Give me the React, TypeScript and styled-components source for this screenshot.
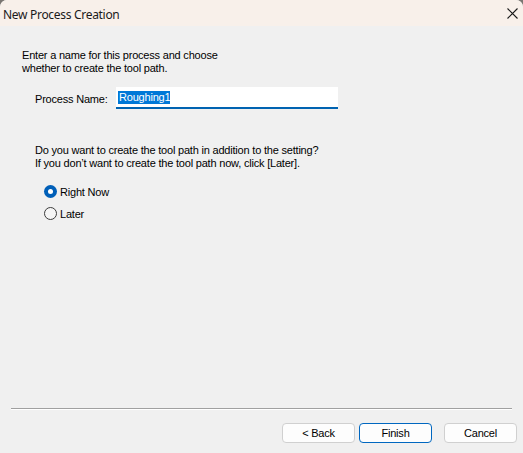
import React, { FC, useState } from 'react';
import styled, { createGlobalStyle } from 'styled-components';

const GlobalStyle = createGlobalStyle`
    html, body {
        margin: 0;
        padding: 0;
        background: #7a7672;
    }
    #root {
        width: 523px;
        height: 453px;
    }
`;

const Window = styled.div`
    width: 523px;
    height: 453px;
    display: flex;
    flex-direction: column;
    background: #f0f0f0;
    border-radius: 7px 7px 0 0;
    overflow: hidden;
    font-family: 'Liberation Sans', Arial, sans-serif;
    font-size: 11px;
    letter-spacing: -0.2px;
    color: #000;
`;

const TitleBar = styled.div`
    height: 26px;
    flex-shrink: 0;
    display: flex;
    align-items: center;
    justify-content: space-between;
    background: #f8f0ea;
    padding: 0 0 0 3px;
`;

const Title = styled.span`
    font-family: 'Noto Sans', 'Open Sans', sans-serif;
    font-size: 12px;
    letter-spacing: -0.3px;
    color: #1a1a1a;
    position: relative;
    top: 1px;
`;

const CloseButton = styled.button`
    width: 22px;
    height: 22px;
    border: none;
    background: transparent;
    display: flex;
    align-items: center;
    justify-content: center;
    padding: 0;
`;

const Content = styled.div`
    flex: 1;
    display: flex;
    flex-direction: column;
    padding: 23px 0 0 22px;
`;

const Paragraph = styled.p<{ indent?: number }>`
    margin: 0;
    line-height: 13px;
    padding-left: ${props => props.indent ?? 0}px;
`;

const NameRow = styled.div`
    display: flex;
    align-items: center;
    margin: 12px 0 35px 13px;
    height: 22px;
`;

const NameLabel = styled.label`
    width: 81px;
    flex-shrink: 0;
    position: relative;
    top: 1px;
`;

const NameField = styled.div`
    width: 220px;
    height: 20px;
    background: #fff;
    border-bottom: 2px solid #0063b1;
    display: flex;
    align-items: center;
    padding-left: 2px;
    box-sizing: content-box;
`;

const Selected = styled.span`
    background: #0078d7;
    color: #fff;
    line-height: 13px;
    padding: 0 0 0 1px;
`;

const RadioList = styled.div`
    display: flex;
    flex-direction: column;
    margin: 10px 0 0 22px;
`;

const RadioRow = styled.label`
    height: 22px;
    display: flex;
    align-items: center;
    gap: 3px;
    cursor: default;
`;

const RadioMark = styled.span<{ checked: boolean }>`
    width: 13px;
    height: 13px;
    box-sizing: border-box;
    border-radius: 50%;
    border: ${props => (props.checked ? '0' : '1px solid #3b3b3b')};
    background: ${props => (props.checked ? '#005fb8' : '#f5f5f5')};
    display: flex;
    align-items: center;
    justify-content: center;

    &::after {
        content: '';
        display: ${props => (props.checked ? 'block' : 'none')};
        width: 5px;
        height: 5px;
        border-radius: 50%;
        background: #fff;
    }
`;

const RadioText = styled.span`
    position: relative;
    top: 1px;
`;

const Separator = styled.div`
    height: 1px;
    margin: 0 11px 0 11px;
    background: #a0a0a0;
    border-bottom: 1px solid #fff;
    flex-shrink: 0;
`;

const ButtonRow = styled.div`
    display: flex;
    justify-content: flex-end;
    padding: 13px 6px 10px 0;
`;

const DialogButton = styled.button<{ primary?: boolean; spaced?: boolean }>`
    width: 73px;
    height: 20px;
    margin-left: ${props => (props.spaced ? 12 : 4)}px;
    box-sizing: border-box;
    border-radius: 4px;
    border: 1px solid ${props => (props.primary ? '#0067c0' : '#d0d0d0')};
    background: #fdfdfd;
    font-family: 'Liberation Sans', Arial, sans-serif;
    font-size: 11px;
    letter-spacing: -0.2px;
    color: #000;
    padding: 0;
`;

type Choice = 'now' | 'later';

export default function App() {
    const [choice, setChoice] = useState<Choice>('now');

    return (
        <>
            <GlobalStyle />
            <Window>
                <TitleBar>
                    <Title>New Process Creation</Title>
                    <CloseButton aria-label="Close">
                        <svg width="11" height="11" viewBox="0 0 11 11">
                            <path d="M0.5 0.5 L10.5 10.5 M10.5 0.5 L0.5 10.5" stroke="#1a1a1a" strokeWidth="1.1" />
                        </svg>
                    </CloseButton>
                </TitleBar>
                <Content>
                    <Paragraph>
                        Enter a name for this process and choose
                        <br />
                        whether to create the tool path.
                    </Paragraph>
                    <NameRow>
                        <NameLabel>Process Name:</NameLabel>
                        <NameField>
                            <Selected>Roughing1</Selected>
                        </NameField>
                    </NameRow>
                    <Paragraph indent={13}>
                        Do you want to create the tool path in addition to the setting?
                        <br />
                        If you don&#8217;t want to create the tool path now, click [Later].
                    </Paragraph>
                    <RadioList>
                        <RadioOption label="Right Now" checked={choice === 'now'} onSelect={() => setChoice('now')} />
                        <RadioOption label="Later" checked={choice === 'later'} onSelect={() => setChoice('later')} />
                    </RadioList>
                </Content>
                <Separator />
                <ButtonRow>
                    <DialogButton>&lt; Back</DialogButton>
                    <DialogButton primary>Finish</DialogButton>
                    <DialogButton spaced>Cancel</DialogButton>
                </ButtonRow>
            </Window>
        </>
    );
}

const RadioOption: FC<{ label: string; checked: boolean; onSelect: () => void }> = ({
    label,
    checked,
    onSelect
}) => (
    <RadioRow onClick={onSelect}>
        <RadioMark checked={checked} />
        <RadioText>{label}</RadioText>
    </RadioRow>
);
